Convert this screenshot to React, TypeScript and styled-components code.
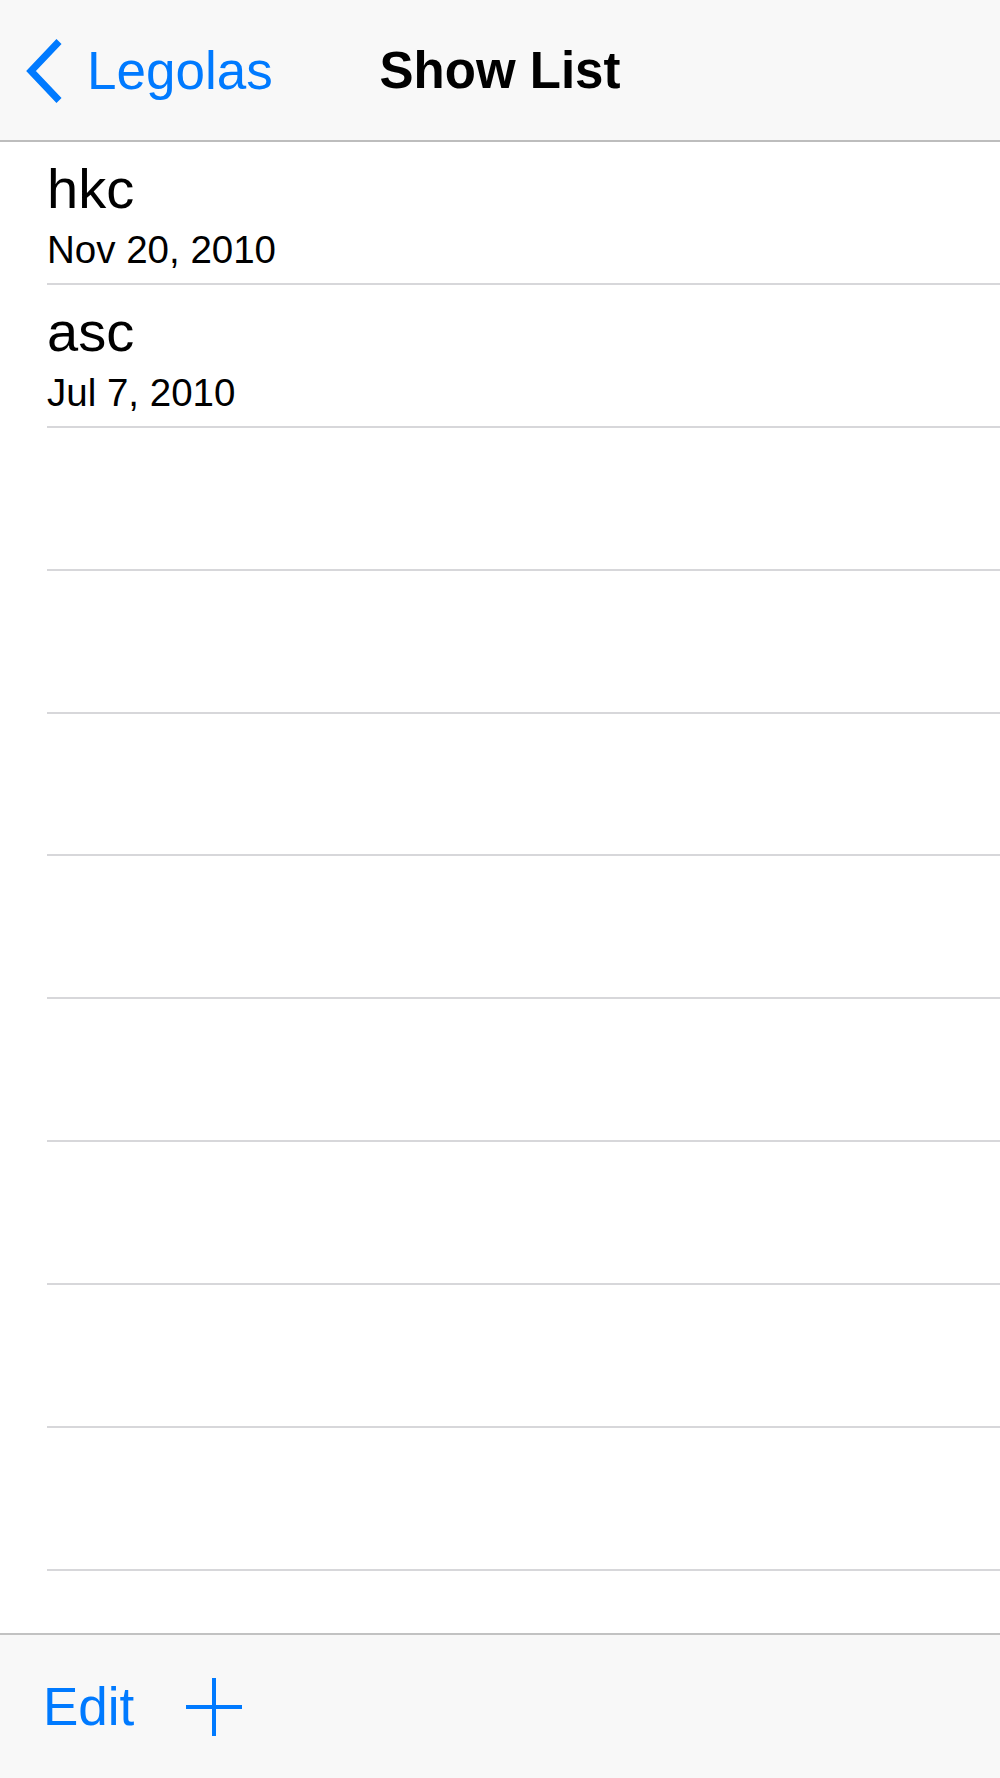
import React from 'react'
import styled, { createGlobalStyle } from 'styled-components'

const GlobalStyle = createGlobalStyle`
  html, body {
    margin: 0;
    padding: 0;
    background: #ffffff;
  }
  body {
    font-family: 'Liberation Sans', Arial, Helvetica, sans-serif;
    -webkit-font-smoothing: antialiased;
  }
`

const Screen = styled.div`
  display: flex;
  flex-direction: column;
  width: 1000px;
  height: 1778px;
  overflow: hidden;
  background: #ffffff;
`

const NavBar = styled.header`
  flex: none;
  display: grid;
  grid-template-columns: 1fr auto 1fr;
  align-items: center;
  height: 139px;
  padding-top: 1px;
  box-sizing: content-box;
  background: #f8f8f8;
  border-bottom: 2px solid #bdbdbd;
`

const BackButton = styled.button`
  justify-self: start;
  display: flex;
  align-items: center;
  gap: 24px;
  padding: 0 0 0 26px;
  margin: 0;
  border: none;
  background: none;
  color: #007aff;
  font-family: 'Liberation Sans', Arial, sans-serif;
  font-size: 53px;
  cursor: pointer;
`

const Title = styled.h1`
  margin: 0;
  font-size: 51px;
  font-weight: bold;
  color: #000000;
  text-align: center;
`

const List = styled.main`
  flex: 1;
  overflow: hidden;
`

const Row = styled.div`
  padding-left: 47px;
`

const Cell = styled.div`
  display: flex;
  flex-direction: column;
  height: 142.9px;
  box-sizing: border-box;
  padding-top: 17px;
  border-bottom: 2px solid #d7d7da;
`

const CellTitle = styled.div`
  font-size: 56px;
  line-height: 60px;
  color: #000000;
`

const CellDetail = styled.div`
  margin-top: 9px;
  font-size: 38.5px;
  line-height: 44px;
  color: #000000;
`

const ToolBar = styled.footer`
  flex: none;
  display: flex;
  align-items: center;
  gap: 52px;
  height: 143px;
  padding-left: 43px;
  background: #f8f8f8;
  border-top: 2px solid #c2c2c2;
`

const ToolButton = styled.button`
  display: flex;
  align-items: center;
  padding: 0;
  margin: 0;
  border: none;
  background: none;
  color: #007aff;
  font-family: 'Liberation Sans', Arial, sans-serif;
  font-size: 53px;
  cursor: pointer;
`

const Chevron = () => (
  <svg width="37" height="64" viewBox="0 0 37 64" fill="none">
    <polyline points="33,2.5 5,32 33,61.5" stroke="#007aff" strokeWidth="7" />
  </svg>
)

const Plus = () => (
  <svg width="56" height="58" viewBox="0 0 56 58" fill="none">
    <line x1="28" y1="0" x2="28" y2="58" stroke="#007aff" strokeWidth="4" />
    <line x1="0" y1="29" x2="56" y2="29" stroke="#007aff" strokeWidth="4" />
  </svg>
)

type Show = { name: string; date: string }

const shows: Show[] = [
  { name: 'hkc', date: 'Nov 20, 2010' },
  { name: 'asc', date: 'Jul 7, 2010' },
]

const EMPTY_ROWS = 9

const App = () => {
  return (
    <Screen>
      <GlobalStyle />
      <NavBar>
        <BackButton>
          <Chevron />
          Legolas
        </BackButton>
        <Title>Show List</Title>
        <div />
      </NavBar>

      <List>
        {shows.map((show) => (
          <Row key={show.name}>
            <Cell>
              <CellTitle>{show.name}</CellTitle>
              <CellDetail>{show.date}</CellDetail>
            </Cell>
          </Row>
        ))}
        {Array.from({ length: EMPTY_ROWS }).map((_, i) => (
          <Row key={`empty-${i}`}>
            <Cell />
          </Row>
        ))}
      </List>

      <ToolBar>
        <ToolButton>Edit</ToolButton>
        <ToolButton aria-label="Add">
          <Plus />
        </ToolButton>
      </ToolBar>
    </Screen>
  )
}

export default App
